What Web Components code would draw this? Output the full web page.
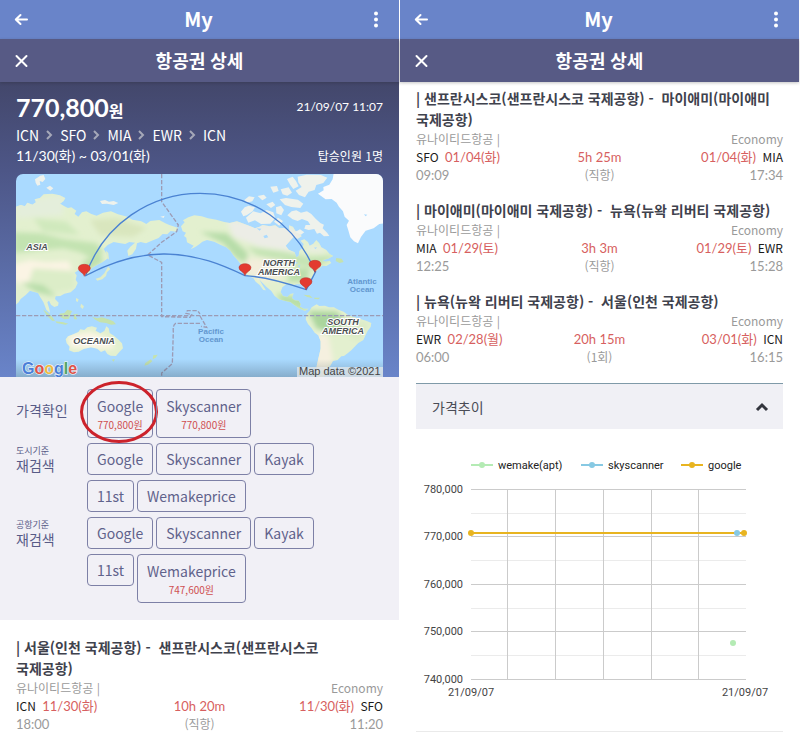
<!DOCTYPE html>
<html lang="ko">
<head>
<meta charset="utf-8">
<meta name="viewport" content="width=device-width, initial-scale=1">
<title>My - 항공권 상세</title>
<style>
  html, body { margin: 0; background: #fff; }
  body { font-family: "Noto Sans CJK KR", sans-serif; color: #3b3d48; --num: Lato, "Noto Sans CJK KR", sans-serif; }
  main { display: grid; grid-template-columns: 1fr 1fr; gap: 1px; padding-right: 1px; height: 100vh; overflow: hidden; }
</style>
</head>
<body>
<main>
  <phone-screen>
    <app-bar slot="bar">My</app-bar>
    <title-bar slot="bar">항공권 상세</title-bar>
    <trip-hero price="770,800" stamp="21/09/07 11:07" stops="ICN,SFO,MIA,EWR,ICN" dates="11/30(화) ~ 03/01(화)" people="탑승인원 1명"><route-map></route-map></trip-hero>
    <offer-panel>
      <offer-row label="가격확인">
        <offer-button price="770,800원" marked>Google</offer-button>
        <offer-button price="770,800원">Skyscanner</offer-button>
      </offer-row>
      <offer-row hint="도시기준" label="재검색">
        <offer-button>Google</offer-button><offer-button>Skyscanner</offer-button><offer-button>Kayak</offer-button>
        <offer-button>11st</offer-button><offer-button>Wemakeprice</offer-button>
      </offer-row>
      <offer-row hint="공항기준" label="재검색">
        <offer-button>Google</offer-button><offer-button>Skyscanner</offer-button><offer-button>Kayak</offer-button>
        <offer-button>11st</offer-button><offer-button price="747,600원">Wemakeprice</offer-button>
      </offer-row>
    </offer-panel>
    <leg-list style="--top:17px">
      <flight-leg from="ICN" to="SFO" dep="11/30(화)" arr="11/30(화)" start="18:00" end="11:20" length="10h 20m" stop="(직항)">| 서울(인천 국제공항) -&nbsp; 샌프란시스코(샌프란시스코 국제공항)</flight-leg>
    </leg-list>
  </phone-screen>
  <phone-screen>
    <app-bar slot="bar">My</app-bar>
    <title-bar slot="bar">항공권 상세</title-bar>
    <leg-list style="--top:6px">
      <flight-leg from="SFO" to="MIA" dep="01/04(화)" arr="01/04(화)" start="09:09" end="17:34" length="5h 25m" stop="(직항)">| 샌프란시스코(샌프란시스코 국제공항) -&nbsp; 마이애미(마이애미 국제공항)</flight-leg>
      <flight-leg from="MIA" to="EWR" dep="01/29(토)" arr="01/29(토)" start="12:25" end="15:28" length="3h 3m" stop="(직항)">| 마이애미(마이애미 국제공항) -&nbsp; 뉴욕(뉴왁 리버티 국제공항)</flight-leg>
      <flight-leg from="EWR" to="ICN" dep="02/28(월)" arr="03/01(화)" start="06:00" end="16:15" length="20h 15m" stop="(1회)">| 뉴욕(뉴왁 리버티 국제공항) -&nbsp; 서울(인천 국제공항)</flight-leg>
    </leg-list>
    <trend-panel label="가격추이"><price-chart></price-chart></trend-panel>
  </phone-screen>
</main>

<script>
const define = (name, render, after) => customElements.define(name, class extends HTMLElement {
  connectedCallback() {
    if (this.shadowRoot) return;
    const root = this.attachShadow({ mode: 'open' });
    root.innerHTML = render(k => this.getAttribute(k) || '');
    if (after) after(this, root);
  }
});

define('phone-screen', () => `
<style>
  :host { display: block; min-width: 0; background: #fff; }
</style>
<slot name="bar"></slot><slot></slot>`);

define('app-bar', () => `
<style>
  :host { display: flex; align-items: center; justify-content: space-between; height: 39px; padding: 0 14px; background: #6984c9; color: #fff; }
  h1 { margin: 0; font-size: 20px; line-height: 38px; height: 39px; font-weight: 700; }
  button { display: flex; padding: 0; border: 0; background: none; color: inherit; }
</style>
<button aria-label="뒤로"><svg width="16" height="16" viewBox="0 0 16 16" fill="none" stroke="currentColor" stroke-width="2" stroke-linecap="round" stroke-linejoin="round"><path d="M6.500 3 1.800 7.500 6.500 12M2 7.500h11"/></svg></button>
<h1><slot></slot></h1>
<button aria-label="메뉴"><svg width="18" height="18" viewBox="0 0 18 18" fill="currentColor"><circle cx="9" cy="2.500" r="2"/><circle cx="9" cy="8.500" r="2"/><circle cx="9" cy="14.500" r="2"/></svg></button>`);

define('title-bar', () => `
<style>
  :host { display: grid; grid-template-columns: 16px 1fr 16px; align-items: center; height: 43px; padding: 0 14px; background: #575a85; color: #fff; position: relative; box-shadow: 0 1px 3px #2224; }
  h2 { margin: 0; text-align: center; font-size: 18px; line-height: 43px; font-weight: 700; }
  button { display: flex; padding: 0; border: 0; background: none; color: inherit; }
</style>
<button aria-label="닫기"><svg width="16" height="16" viewBox="0 0 16 16" stroke="currentColor" stroke-width="2" stroke-linecap="round"><path d="m2.500 3 10 10M12.500 3l-10 10"/></svg></button>
<h2><slot></slot></h2>`);

define('trip-hero', a => `
<style>
  :host { display: block; padding: 10px 16px 0; background: linear-gradient(#43476b, #4d5687 30%, #6984c9); color: #fff; }
  .row { display: flex; justify-content: space-between; align-items: center; }
  .price { font: 700 25px/30px var(--num); height: 30px; }
  .price small { font-size: 16px; line-height: 20px; }
  .num { font: 12px/18px var(--num); }
  .stops { display: flex; align-items: center; gap: 7px; height: 22px; font-size: 14px; line-height: 22px; padding-top: 2px; }
  .stops svg { display: block; }
  .dates { font: 14px/20px var(--num); }
  .people { font-size: 12px; line-height: 18px; }
  ::slotted(*) { margin-top: 8px; }
</style>
<div class="row"><span class="price">${a('price')}<small>원</small></span><time class="num">${a('stamp')}</time></div>
<div class="stops">${a('stops').split(',').map(s => `<span>${s}</span>`).join('<svg width="7" height="10" viewBox="0 0 7 10" fill="none" stroke="#a5a8b8" stroke-width="2"><path d="m1 1 4 4-4 4"/></svg>')}</div>
<div class="row"><span class="dates">${a('dates')}</span><span class="people">${a('people')}</span></div>
<slot></slot>`);

const pin = (x, y) => `<path transform="translate(${x} ${y})" d="M0 0C-2-12-18-13-18-24c0-16 36-16 36 0C18-13 2-12 0 0Z" fill="#e33b30" stroke="#b3352c" stroke-width="1.500"/>`;

define('route-map', () => `
<style>
  :host { display: block; border-radius: 7px 7px 0 0; overflow: hidden; }
  svg { display: block; width: 100%; height: auto; }
  .c { font: italic 700 9px "Liberation Sans", sans-serif; fill: #4c5051; stroke: #fff; stroke-width: 2; paint-order: stroke; text-anchor: middle; }
  .o { font: 700 8px "Liberation Sans", sans-serif; fill: #6297cf; text-anchor: middle; }
</style>
<svg viewBox="0 0 367 203" role="img" aria-label="여정 지도">
<defs>
  <filter id="s" x="-20%" y="-20%" width="140%" height="140%"><feGaussianBlur stdDeviation="8"/></filter>
  <linearGradient id="sh" x2="0" y2="1"><stop offset="0" stop-color="#345" stop-opacity="0"/><stop offset="1" stop-color="#345" stop-opacity=".3"/></linearGradient>
  <path id="asia" d="M40 128 62 120 75 124 82 113 97 119 108 112 104 103 120 99 131 88 157 86 179 91 196 99 191 108 180 116 193 124 204 129 214 127 229 137 224 147 235 155 246 142 259 139 274 147 290 152 309 143 333 139 354 148 382 155 397 164 424 169 439 177 451 168 478 165 496 175 508 180 535 189 529 200 512 198 502 208 488 207 476 219 459 226 438 235 422 231 411 235 408 251 397 268 385 273 382 257 391 245 405 233 388 231 376 237 357 234 341 231 323 240 311 252 320 267 324 280 307 292 291 300 277 308 268 317 269 330 257 333 253 318 247 310 235 316 224 323 230 331 227 344 233 354 226 369 212 382 193 386 181 393 167 394 165 402 176 413 174 422 163 426 153 419 147 407 142 412 148 432 150 444 139 434 130 411 121 397 114 384 100 380 90 377 78 389 62 402 56 412 40 425Z"/>
  <path id="na" d="M543 184 554 172 549 166 565 157 583 151 605 154 624 160 649 164 673 171 689 174 711 169 727 175 749 183 765 190 779 185 788 180 809 184 826 181 838 190 852 189 868 196 867 181 879 185 886 197 899 205 905 214 893 221 880 216 869 229 857 242 866 254 884 262 889 277 896 273 898 258 907 250 911 237 902 227 913 223 924 231 929 242 940 236 949 225 958 235 964 247 979 255 989 267 1000 273 984 281 967 286 977 290 989 287 994 294 979 303 967 302 956 313 949 319 945 328 938 337 927 346 918 354 919 366 920 377 913 369 907 358 889 358 875 362 859 358 847 367 842 381 849 393 862 396 871 387 881 385 876 399 884 406 896 407 902 417 900 425 912 431 926 431 915 438 897 430 884 421 871 411 856 408 837 403 824 393 814 378 799 365 785 351 777 342 787 359 798 376 790 375 779 360 767 350 760 339 746 333 735 325 728 311 722 297 713 286 700 271 691 257 679 247 661 239 643 230 621 225 607 230 599 237 586 246 572 253 581 242 572 238 561 232 559 218 552 213 558 203 548 199Z"/>
  <path id="sa" d="M920 448 929 437 935 427 950 418 958 423 975 422 987 427 1002 427 1015 434 1031 440 1044 450 1061 456 1078 461 1098 467 1114 474 1112 486 1103 497 1097 510 1090 525 1075 534 1064 545 1054 556 1043 565 1032 573 1024 574 1013 585 999 588 991 602 977 615 971 640 953 640 950 604 956 577 962 551 962 529 955 511 944 503 935 490 924 477 917 463Z"/>
  <path id="au" d="M197 523 204 514 220 508 235 501 241 493 253 495 262 487 276 484 291 488 287 497 301 505 313 498 319 484 326 490 329 504 342 512 354 523 366 535 369 550 358 561 348 573 332 572 322 567 315 556 303 561 292 551 273 547 251 552 236 560 222 562 207 556 209 545 200 535Z"/>
  <path id="gl" d="M954 86 971 76 970 66 988 59 998 43 1002 20 1160 20 1160 174 1138 177 1121 190 1097 197 1083 216 1074 235 1062 229 1051 217 1045 196 1040 180 1047 167 1034 155 1029 139 1017 125 1010 113 995 102 977 103Z"/>
  <clipPath id="land"><use href="#asia"/><use href="#na"/><use href="#sa"/><use href="#au"/></clipPath>
</defs>
<rect width="367" height="203" fill="#aadaff"/>
<g transform="scale(.3333) translate(-48 -27)">
  <g fill="#e3f0cf"><use href="#asia"/><use href="#na"/><use href="#sa"/><use href="#au"/></g>
  <g clip-path="url(#land)"><g filter="url(#s)">
    <path d="M50 110 190 90 190 150 50 160Z" fill="#e4eedb"/>
    <path d="M40 202 120 205 190 222 290 235 310 260 285 285 240 262 190 250 130 255 40 265Z" fill="#c3e3b1"/>
    <path d="M100 160 200 170 240 210 130 200Z" fill="#d0e9bd"/>
    <path d="M270 165 350 160 440 190 400 215 300 210Z" fill="#d9e6be"/>
    <path d="M40 298 90 285 140 292 205 288 218 316 190 325 150 330 115 352 60 360 40 340Z" fill="#fbf4e4"/>
    <path d="M100 310 220 318 225 370 140 385 80 370Z" fill="#dcedc8"/>
    <path d="M60 350 130 360 170 395 110 382Z" fill="#b9deaa"/>
    <path d="M245 290 300 265 310 290 262 320Z" fill="#bfe1ae"/>
    <path d="M680 165 860 180 910 205 890 260 780 245 700 215Z" fill="#ecede6"/>
    <path d="M600 200 680 205 740 260 750 300 710 280 670 235Z" fill="#b7dda9"/>
    <path d="M740 245 850 260 920 275 1010 270 950 310 890 300 770 270Z" fill="#c5e4b4"/>
    <path d="M738 280 850 285 845 340 790 350 740 325Z" fill="#f3eedb"/>
    <path d="M880 310 930 310 920 350 860 350Z" fill="#bbdfaa"/>
    <path d="M830 385 920 400 920 440 840 410Z" fill="#b9dfa7"/>
    <path d="M925 240 970 245 970 265 920 260Z" fill="#e8eee0"/>
    <path d="M925 438 1010 440 1040 475 1000 505 950 490Z" fill="#abd59d"/>
    <path d="M1030 460 1110 475 1080 530 1020 500Z" fill="#dcebc7"/>
    <path d="M950 505 985 510 1000 590 960 640 940 600Z" fill="#f5f0df"/>
    <path d="M205 510 270 500 325 520 345 550 300 552 210 548Z" fill="#fbf5e5"/>
  </g></g>
  <g fill="#dfedc9">
    <path d="M324 305 331 312 321 322 318 333 307 343 292 347 287 341 301 337 313 325Z"/>
    <path d="M318 257 325 264 327 284 320 277Z"/>
    <path d="M228 399 236 403 233 411 228 408ZM243 416 252 424 248 432 241 426Z"/>
  </g>
  <g fill="#c5e2ae">
    <path d="M129 433 143 443 157 456 165 468 156 467 141 452ZM166 469 190 472 205 476 196 479 170 474Z"/>
    <path d="M178 446 193 444 202 434 216 438 211 449 207 461 193 463 182 457Z"/>
    <path d="M220 448 236 446 226 452 232 463 222 463ZM276 456 292 460 305 457 325 463 340 469 348 478 333 479 318 474 300 472 286 464Z"/>
    <path d="M335 584 345 582 341 590ZM460 571 473 569 467 578 458 583ZM452 583 457 589 444 599 433 602 436 594Z"/>
    <path d="M910 389 929 391 938 399 922 396ZM942 398 961 398 955 403 944 402ZM1009 279 1025 281 1031 291 1019 294 1007 288Z"/>
  </g>
  <g fill="#eff2ec">
    <path d="M105 43 121 32 131 30 136 42 128 51 119 48 121 59 112 62 107 53ZM139 68 150 62 160 70 151 77ZM300 108 315 105 327 110 341 108 355 114 341 120 321 116 306 117ZM481 155 494 152 491 159Z"/>
    <path d="M723 140 734 127 746 122 765 127 758 139 740 151 730 154ZM738 158 760 139 782 145 800 135 820 142 826 160 811 176 783 177 765 166 745 173ZM733 105 747 94 764 97 757 109 741 113ZM773 93 792 89 800 98 787 106ZM799 118 818 110 826 120 813 129ZM828 127 843 122 852 135 844 151 829 145ZM822 170 834 158 849 168 838 182ZM839 103 858 99 894 104 910 116 901 129 874 126 855 120ZM811 65 831 63 836 78 820 83ZM842 73 866 67 876 83 862 92 848 88ZM861 42 878 35 888 48 896 64 880 72 871 60ZM893 35 920 29 963 30 982 38 970 54 949 60 944 75 926 80 915 97 897 90 887 77 905 66 895 52ZM862 151 875 139 889 136 903 143 921 139 934 147 947 161 961 174 972 179 968 190 982 204 988 213 972 214 960 203 951 206 943 192 926 195 913 191 917 180 931 180 924 169 906 162 893 168 878 163ZM886 201 900 193 913 202 903 209Z"/>
  </g>
  <use href="#gl" fill="#fafbfc"/>
  <g fill="#aadaff">
    <path d="M790 213 800 209 805 217 794 220ZM770 190 784 191 779 197ZM868 291 883 287 894 294 883 298ZM893 302 901 299 899 309ZM1092 148 1102 149 1097 154ZM942 248 951 247 947 252Z"/>
  </g>
  <g fill="none" stroke="#9c9bb5" stroke-width="4" stroke-dasharray="13 5">
    <path d="M48 452H1149M485 27V110L535 180 530 200 485 232 443 270 485 292V455L570 457 575 449 558 445 562 437 593 437 600 447M600 453 620 487 603 484M600 475H527Q518 480 520 500L517 596 485 624V640"/>
  </g>
  <g fill="none" stroke="#4a82d2" stroke-width="4" stroke-linecap="round">
    <path d="M257 332C310 175 455 85 600 85 755 85 889 178 945 320"/>
    <path d="M257 332C340 287 420 268 490 267 590 266 672 302 735 332M735 332C795 335 860 354 919 374L947 320"/>
  </g>
  ${pin(253, 334)}${pin(735, 332)}${pin(918, 374)}${pin(945, 322)}
</g>
<text class="c" x="21" y="76">ASIA</text><text class="c" x="78" y="170">OCEANIA</text>
<text class="c" x="263" y="92">NORTH</text><text class="c" x="263" y="101">AMERICA</text>
<text class="c" x="327" y="151">SOUTH</text><text class="c" x="327" y="160">AMERICA</text>
<text class="o" x="346" y="110">Atlantic</text><text class="o" x="346" y="118">Ocean</text>
<text class="o" x="195" y="160">Pacific</text><text class="o" x="195" y="168">Ocean</text>
<rect y="185" width="367" height="18" fill="url(#sh)"/>
<rect x="281" y="193" width="86" height="10" fill="#e3e7ea" opacity=".75"/>
<text x="283" y="201" font-family="Liberation Sans" font-size="11" fill="#444">Map data ©2021</text>
<text x="6" y="200" font-family="Liberation Sans" font-size="16" font-weight="700" stroke="#fff" stroke-width="1" paint-order="stroke"><tspan fill="#4a7fd8">G</tspan><tspan fill="#dd5347">o</tspan><tspan fill="#eebb42">o</tspan><tspan fill="#4a7fd8">g</tspan><tspan fill="#4fa464">l</tspan><tspan fill="#dd5347">e</tspan></text>
</svg>`);

define('offer-panel', () => `
<style>:host { display: grid; gap: 5px; padding: 12px 16px 17px; background: #f1f0f6; color: #585b87; }</style><slot></slot>`);

define('offer-row', a => `
<style>
  :host { display: grid; grid-template-columns: 71px 1fr; }
  .label { font-size: 14px; line-height: 16px; padding-top: ${a('hint') ? 2 : 13}px; }
  .label small { display: block; font-size: 9px; line-height: 12px; }
  .items { display: flex; flex-wrap: wrap; align-items: flex-start; gap: 5px 3px; max-width: 240px; }
</style>
<div class="label">${a('hint') ? `<small>${a('hint')}</small>` : ''}${a('label')}</div>
<div class="items"><slot></slot></div>`);

define('offer-button', a => `
<style>
  :host { display: block; position: relative; }
  button { display: block; box-sizing: border-box; height: ${a('price') ? 49 : 32}px; padding: 0 9px; border: 1px solid #7d80a6; border-radius: 4px; background: none; color: #5f628b; font: 14px/30px "Noto Sans CJK KR", sans-serif; text-align: center; }
  small { display: block; font-size: 10px; line-height: 12px; color: #cf4f50; padding-bottom: 6px; margin-top: -2px; }
  .mark { position: absolute; inset: -8px -5px -5px -7px; border: 3px solid #cc222b; border-radius: 50%; pointer-events: none; }
</style>
<button><slot></slot>${a('price') ? `<small>${a('price')}</small>` : ''}</button>`,
(el, root) => { if (el.hasAttribute('marked')) root.innerHTML += '<span class="mark"></span>'; });

define('leg-list', () => `
<style>:host { display: grid; gap: 16px; padding: var(--top) 16px 0; }</style><slot></slot>`);

define('flight-leg', a => `
<style>
  :host { display: block; }
  h3 { margin: 0; padding-right: 8px; font-size: 14px; line-height: 21px; font-weight: 700; word-break: keep-all; color: #3f424d; }
  .g { display: grid; grid-template-columns: 1fr auto 1fr; grid-auto-rows: 18px; font-size: 12px; line-height: 18px; color: #9a9a9a; }
  .g > :nth-child(3n) { text-align: right; }
  .g > :nth-child(3n+2) { text-align: center; }
  b { font-weight: 400; color: #1a1a1a; }
  i { font: 13px/18px var(--num); color: #d75f60; margin: 0 3px; }
  .h { font: 13px/18px var(--num); color: #d75f60; }
  time { font: 13px/18px var(--num); }
</style>
<h3><slot></slot></h3>
<div class="g">
  <span>유나이티드항공 |</span><span></span><span>Economy</span>
  <span><b>${a('from')}</b> <i>${a('dep')}</i></span><span class="h">${a('length')}</span><span><i>${a('arr')}</i> <b>${a('to')}</b></span>
  <time>${a('start')}</time><span>${a('stop')}</span><time>${a('end')}</time>
</div>`);

define('trend-panel', a => `
<style>
  :host { display: block; margin: 17px 16px 0; border-bottom: 1px solid #eaeaea; }
  button { display: flex; width: 100%; height: 46px; align-items: center; justify-content: space-between; padding: 0 14px 0 16px; border: 0; border-top: 1px solid #7f9aa8; background: #f0f0f5; color: #4a4c55; font: 14px/20px "Noto Sans CJK KR", sans-serif; }
</style>
<button aria-expanded="true">${a('label')}<svg width="14" height="10" viewBox="0 0 14 10" fill="none" stroke="#33353d" stroke-width="3"><path d="m2 8 5-5 5 5"/></svg></button>
<slot></slot>`);

define('price-chart', () => {
  const key = (x, c, t) => `<path d="M${x} 36h22" stroke="${c}" stroke-width="2"/><circle cx="${x + 11}" cy="36" r="3" fill="${c}"/><text x="${x + 27}" y="40">${t}</text>`;
  const y = [60, 107, 155, 202, 250];
  return `
<style>
  :host { display: block; }
  svg { display: block; width: 100%; height: auto; }
  text { font: 11px Roboto, sans-serif; fill: #444; }
  .k text { fill: #222; }
</style>
<svg viewBox="0 0 367 302" role="img" aria-label="가격추이">
  <g class="k">${key(55, '#b4ebb4', 'wemake(apt)')}${key(165, '#87c9e3', 'skyscanner')}${key(265, '#e8b420', 'google')}</g>
  <g shape-rendering="crispEdges">
  ${[84, 131, 179, 226].map(v => `<rect x="55" y="${v}" width="275" height="1" fill="#ebebeb"/>`).join('')}
  ${y.map(v => `<rect x="55" y="${v}" width="275" height="1" fill="#cbcbcb"/>`).join('')}
  ${[91, 139, 187, 235, 282].map(v => `<rect x="${v}" y="60" width="1" height="190" fill="#cbcbcb"/>`).join('')}
  </g>
  ${y.map((v, i) => `<text x="47" y="${v + 4}" text-anchor="end">${780 - i * 10},000</text>`).join('')}
  <path d="M55 104h273" stroke="#e8b420" stroke-width="2"/>
  <circle cx="55" cy="104" r="3" fill="#e8b420"/><circle cx="328" cy="104" r="3" fill="#e8b420"/>
  <circle cx="321" cy="104" r="3" fill="#87c9e3"/><circle cx="317" cy="214" r="3" fill="#b4ebb4"/>
  <text x="55" y="267" text-anchor="middle">21/09/07</text><text x="329" y="267" text-anchor="middle">21/09/07</text>
</svg>`; });
</script>
</body>
</html>
